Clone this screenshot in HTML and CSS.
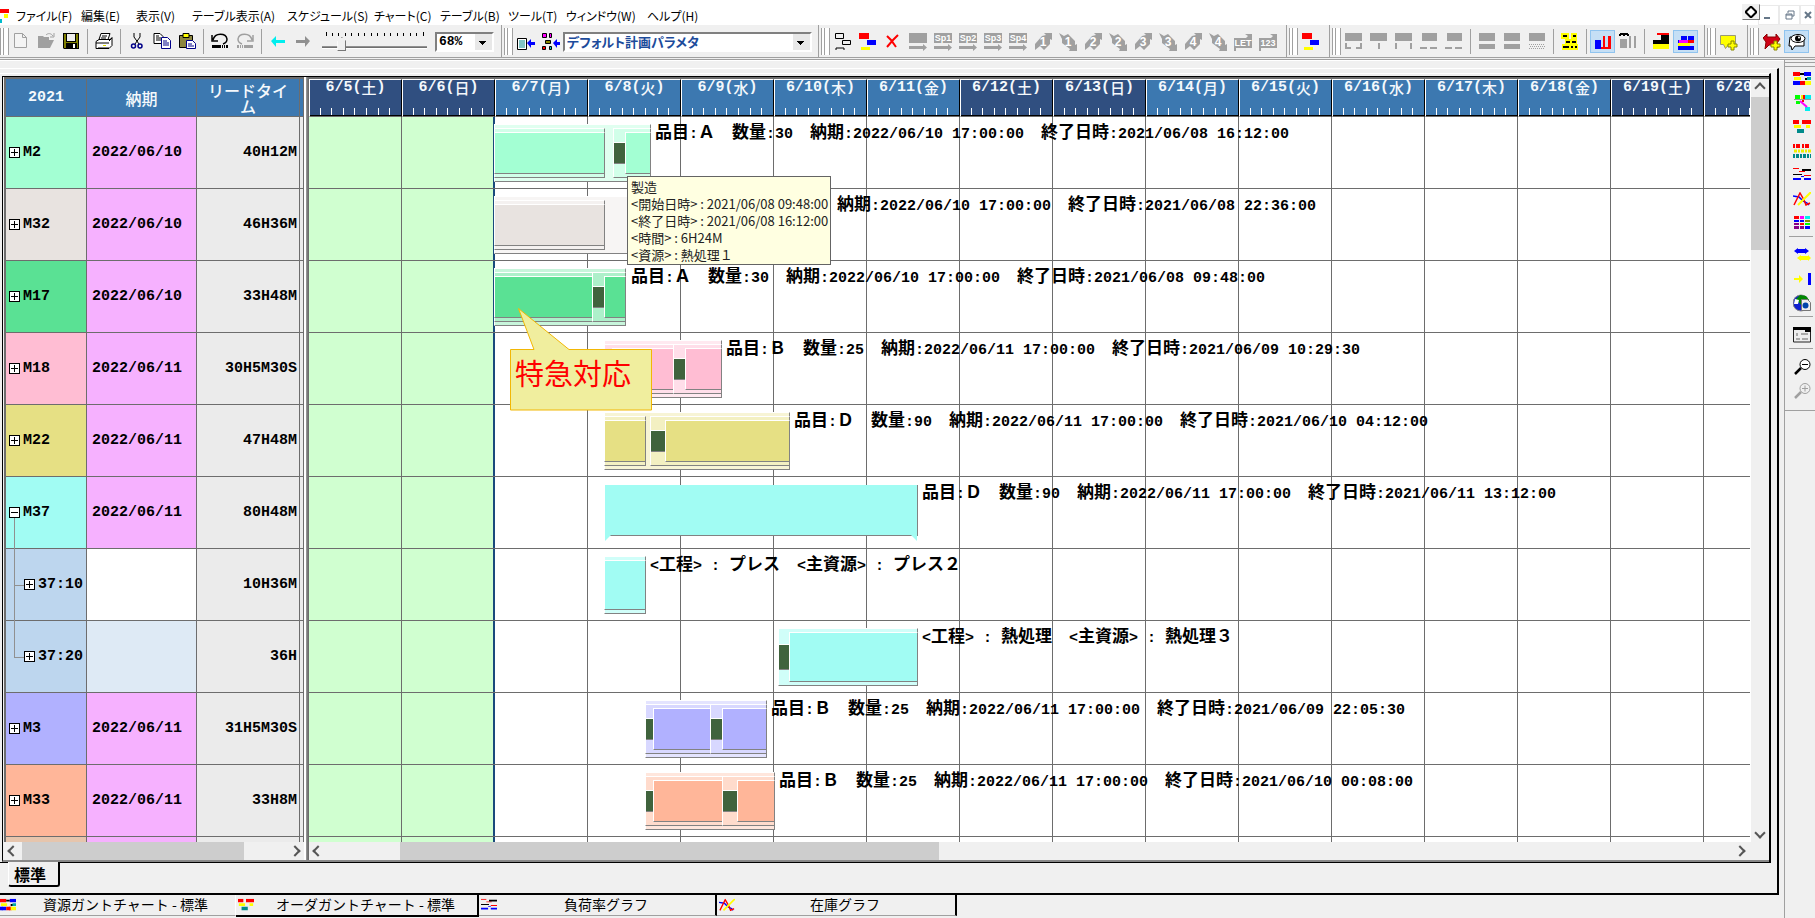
FILE: index.html
```html
<!DOCTYPE html>
<html lang="ja">
<head>
<meta charset="utf-8">
<title>オーダガントチャート</title>
<link rel="stylesheet" href="styles.css">
</head>
<body>
<svg class="defs" aria-hidden="true">
  <symbol id="ticks" viewBox="0 0 93 7"><path d="M11.5 0v7M22.5 0v7M34.5 0v7M45.5 0v7M57.5 0v7M69.5 0v7M80.5 0v7" stroke="#fff"/></symbol>
  <symbol id="sp" viewBox="0 0 18 18"><path d="M0 0h18v10H0zM0 13h14v-2l4 3.500-4 3.500v-2H0z" fill="#a0a0a0"/></symbol>
  <symbol id="up" viewBox="0 0 18 18"><path d="M10 0h8v7l-2-1v5l-6 6-4-4-5 4v-6L8 3l4-1z" fill="#a0a0a0"/></symbol>
  <symbol id="dn" viewBox="0 0 18 18"><path d="M0 0l5 3 4-2 7 7v4l2-1v7h-8l1-2-8-6V6z" fill="#a0a0a0"/></symbol>
  <symbol id="flag" viewBox="0 0 18 18"><path d="M0 5h12l2-2-3-2h7v14H2v3H0z" fill="#a0a0a0"/></symbol>
  <symbol id="res" viewBox="0 0 18 14"><path d="M0 0h7v4H0zM13 9h-3v4h3z" fill="#f00"/><path d="M7 1h4v2H7zM12 6h3v2h-3z" fill="#000"/><path d="M11 0h7v4h-7zM2 9h5v4H2z" fill="#00f"/><path d="M1 5h7v3H1zM12 9h6v4h-6z" fill="#ff0"/><path d="M14 5h4v3h-4z" fill="#0aa"/><path d="M0 9h3v4H0z" fill="#00f"/><path d="M7 9h4v4H7z" fill="#f00"/></symbol>
  <symbol id="ord" viewBox="0 0 18 14"><path d="M0 0h6v4H0zM9 0h9v4H9z" fill="#f00"/><path d="M1 5h7v3H1zM13 5h4v3h-4z" fill="#ff0"/><path d="M4 9h7v4H4z" fill="#008b8b"/></symbol>
  <symbol id="load" viewBox="0 0 18 14"><path d="M0 0h6v1H0zM6 3h6v1H6zM11 7h7v1h-7z" fill="#f00"/><path d="M9 1h9v2H9zM0 6h9v1H0z" fill="#000"/><path d="M0 10h8v2H0zM11 10h7v2h-7zM8 8h3v1H8z" fill="#00f"/></symbol>
  <symbol id="stock" viewBox="0 0 18 14"><path d="M0 4l6 1 4 4 4 2 2 2" stroke="#00f" stroke-width="1.500" fill="none"/><path d="M1 13L7 1l4 7 2 5 4-2" stroke="#f00" stroke-width="1.500" fill="none"/><path d="M5 13l7-7 6-6" stroke="#ff0" stroke-width="2" fill="none"/></symbol>
</svg>

<header class="menubar">
  <svg class="app" viewBox="0 0 9 14"><path d="M0 0h9v4H0z" fill="#f00"/><path d="M4 5h4v4H4z" fill="#ff0"/><path d="M0 10h2v4H0z" fill="#0bc"/></svg>
  <nav class="menus">
    <button>ファイル(F)</button><button>編集(E)</button><button>表示(V)</button><button>テーブル表示(A)</button><button>スケジュール(S)</button><button>チャート(C)</button><button>テーブル(B)</button><button>ツール(T)</button><button>ウィンドウ(W)</button><button>ヘルプ(H)</button>
  </nav>
  <div class="winbtns">
    <button class="pin" aria-label="ピン"><svg viewBox="0 0 12 12"><path d="M5.500 1h1L11 5.500v1L6.500 11h-1L1 6.500v-1z" fill="#fff" stroke="#000" stroke-width="2"/></svg></button>
    <button aria-label="最小化"><svg viewBox="0 0 12 12"><path d="M1 8h6v2H1z" fill="#667788"/></svg></button>
    <button aria-label="元に戻す"><svg viewBox="0 0 12 12"><path d="M4 4V2h6v5H8M2 5h6v5H2zM2 6h6" fill="none" stroke="#667788"/></svg></button>
    <button aria-label="閉じる"><svg viewBox="0 0 12 12"><path d="M3 3l6 6M9 3l-6 6" stroke="#667788" stroke-width="2"/></svg></button>
  </div>
</header>

<div class="toolbars">
  <div class="bar first">
    <button aria-label="新規"><svg viewBox="0 0 18 18"><path d="M2.500.5h8l4 4v10h-12zM10.500.5v4h4" fill="#f4f4f4" stroke="#a0a0a0"/></svg></button>
    <button aria-label="開く"><svg viewBox="0 0 18 18"><path d="M1 3h5l1 1h5v3h5l-4 8H1z" fill="#a0a0a0"/><path d="M9 2c2-2 5-2 7 1M17 0v4h-4" stroke="#a0a0a0" fill="none"/></svg></button>
    <button aria-label="保存"><svg viewBox="0 0 18 18"><path d="M1 0h16v16H2l-1-1z" fill="#000"/><path d="M2 1h2v8h10V1h2v14H2z" fill="#808000"/><path d="M5 1h8v7H5z" fill="#efefef"/><path d="M4 10h11v5H4z" fill="#000"/><path d="M11 11h2v4h-2z" fill="#fff"/></svg></button>
    <span class="sep"></span>
    <button aria-label="印刷"><svg viewBox="0 0 18 18"><path d="M6 .5h9l-2 6H4zM1 8.500l3-2h11l2-2v8l-3 3H1z" fill="#fff" stroke="#000"/><path d="M1 10h13M7 3h5M6 5h5M14 8l3-3M3 15h11" stroke="#000"/><path d="M8 12h3v1H8z" fill="#dd0"/></svg></button>
    <span class="sep"></span>
    <button aria-label="切り取り"><svg viewBox="0 0 18 18"><path d="M6 0v4l5 7M12 0v4L7 11" stroke="#000" fill="none"/><circle cx="5.500" cy="13" r="2" stroke="#008" fill="none" stroke-width="1.500"/><circle cx="12" cy="13" r="2" stroke="#008" fill="none" stroke-width="1.500"/></svg></button>
    <button aria-label="コピー"><svg viewBox="0 0 18 18"><path d="M1 .5h6l3 3v7H1z" fill="#fff" stroke="#000"/><path d="M3 3h3M3 5h5M3 7h5" stroke="#000"/><path d="M8.500 4.500h6l3 3v8h-9z" fill="#fff" stroke="#008"/><path d="M10 8h4M10 10h6M10 12h6" stroke="#008"/></svg></button>
    <button aria-label="貼り付け"><svg viewBox="0 0 18 18"><path d="M1.500 2.500h13v12h-13z" fill="#8c8640" stroke="#000"/><path d="M5 .5h6v4H5z" fill="#ff0" stroke="#000"/><path d="M8.500 7.500h6l3 3v5h-9z" fill="#fff" stroke="#008"/><path d="M10 11h4M10 13h6" stroke="#008"/></svg></button>
    <span class="sep"></span>
    <button aria-label="元に戻す"><svg viewBox="0 0 18 18"><path d="M1 2v6h6M2 7c2-8 13-7 14-1 0 3-1 4-4 5" fill="none" stroke="#000" stroke-width="1.500"/><path d="M1 12h9v3H1zM11 12h1v3h-1zM13 12h1v3h-1zM15 12h2v3h-2z"/></svg></button>
    <button aria-label="やり直し"><svg viewBox="0 0 18 18"><path d="M17 2v6h-6M16 7C14-1 3 0 2 6c0 3 1 4 4 5" fill="none" stroke="#a0a0a0" stroke-width="1.500"/><path d="M8 12h9v3H8zM6 12h1v3H6zM4 12h1v3H4zM1 12h2v3H1z" fill="#a0a0a0"/></svg></button>
    <span class="sep"></span>
    <button aria-label="前へ"><svg viewBox="0 0 18 18"><path d="M2 8l5-5v4h9v3H7v4z" fill="#0ee"/></svg></button>
    <button aria-label="次へ"><svg viewBox="0 0 18 18"><path d="M16 8l-5-5v4H2v3h9v4z" fill="#909090"/></svg></button>
    <div class="zoomer">
      <svg viewBox="0 0 105 5"><path d="M4.500 0v4M10.500 1v3M16.500 1v3M23.500 1v3M29.500 1v3M36.500 1v3M42.500 1v3M49.500 1v3M55.500 1v3M62.500 1v3M68.500 1v3M75.500 1v3M81.500 1v3M88.500 1v3M94.500 1v3M101.500 0v4" stroke="#000"/></svg>
      <input type="range" min="0" max="100" value="16" aria-label="ズーム">
    </div>
    <select class="pct" aria-label="倍率"><option>68%</option></select>
  </div>
  <div class="bar">
    <button aria-label="計画実行"><svg viewBox="0 0 18 18"><path d="M.5 5.500h9v11h-9z" fill="#fff" stroke="#000"/><path d="M2 8h6M2 10h6M2 12h6M2 14h6" stroke="#088"/><path d="M10 10l4-4v3h4v3h-4v3z" fill="#00f"/></svg></button>
    <button aria-label="計画設定"><svg viewBox="0 0 18 18"><path d="M.5.5h4v4h-4zM7.500.5h2v4h-2z" fill="#f0f" stroke="#000"/><path d="M3.500 7.500h5v3h-5z" fill="#880" stroke="#000"/><path d="M.5 13.500h3v3h-3z" fill="#f00" stroke="#000"/><path d="M7.500 13.500h2v3h-2z" fill="#0cc" stroke="#000"/><path d="M11 10l4-4v3h3v3h-3v3z" fill="#00f"/></svg></button>
    <select class="param" aria-label="計画パラメタ"><option>デフォルト計画パラメタ</option></select>
  </div>
  <div class="bar">
    <button aria-label="選択"><svg viewBox="0 0 18 18"><path d="M1.500.5h8v5h-8zM8.500 7.500h8v4h-8zM2 17v-2h8v2" fill="none" stroke="#000"/></svg></button>
    <button aria-label="表示切替"><svg viewBox="0 0 18 18"><path d="M0 0h10v6H0z" fill="#f00"/><path d="M8 7h9v5H8z" fill="#00f"/><path d="M2 14h9v3H2z" fill="#ff0"/></svg></button>
    <button aria-label="削除"><svg viewBox="0 0 18 18"><path d="M3 3l4 4 5 7M14 2L9 7l-6 7" stroke="#f00" stroke-width="2" fill="none"/></svg></button>
    <button aria-label="割付"><svg viewBox="0 0 18 18"><use href="#sp"/></svg></button>
    <button aria-label="Sp1"><svg viewBox="0 0 18 18"><use href="#sp"/><text x="9" y="8">Sp1</text></svg></button>
    <button aria-label="Sp2"><svg viewBox="0 0 18 18"><use href="#sp"/><text x="9" y="8">Sp2</text></svg></button>
    <button aria-label="Sp3"><svg viewBox="0 0 18 18"><use href="#sp"/><text x="9" y="8">Sp3</text></svg></button>
    <button aria-label="Sp4"><svg viewBox="0 0 18 18"><use href="#sp"/><text x="9" y="8">Sp4</text></svg></button>
    <button aria-label="1上"><svg class="big" viewBox="0 0 18 18"><use href="#up"/><text x="9" y="13">1</text></svg></button>
    <button aria-label="1下"><svg class="big" viewBox="0 0 18 18"><use href="#dn"/><text x="9" y="13">1</text></svg></button>
    <button aria-label="2上"><svg class="big" viewBox="0 0 18 18"><use href="#up"/><text x="9" y="13">2</text></svg></button>
    <button aria-label="2下"><svg class="big" viewBox="0 0 18 18"><use href="#dn"/><text x="9" y="13">2</text></svg></button>
    <button aria-label="3上"><svg class="big" viewBox="0 0 18 18"><use href="#up"/><text x="9" y="13">3</text></svg></button>
    <button aria-label="3下"><svg class="big" viewBox="0 0 18 18"><use href="#dn"/><text x="9" y="13">3</text></svg></button>
    <button aria-label="4上"><svg class="big" viewBox="0 0 18 18"><use href="#up"/><text x="9" y="13">4</text></svg></button>
    <button aria-label="4下"><svg class="big" viewBox="0 0 18 18"><use href="#dn"/><text x="9" y="13">4</text></svg></button>
    <button aria-label="LET"><svg viewBox="0 0 18 18"><use href="#flag"/><text x="9" y="13">LET</text></svg></button>
    <button aria-label="123"><svg viewBox="0 0 18 18"><use href="#flag"/><text x="9" y="13">123</text></svg></button>
  </div>
  <div class="bar">
    <button aria-label="オーダ"><svg viewBox="0 0 18 18"><path d="M0 0h10v6H0z" fill="#f00"/><path d="M8 7h9v5H8z" fill="#00f"/><path d="M2 14h9v3H2z" fill="#ff0"/></svg></button>
  </div>
  <div class="bar gray">
    <button aria-label="分割"><svg viewBox="0 0 18 18"><path d="M0 0h17v8H0zM0 10h2v4h4v2H0zM15 10h2v6h-6v-2h4z"/></svg></button>
    <button aria-label="結合"><svg viewBox="0 0 18 18"><path d="M0 0h17v8H0zM8 10h2v6H8z"/></svg></button>
    <button aria-label="連結"><svg viewBox="0 0 18 18"><path d="M0 0h17v8H0zM0 10h2v6H0zM15 10h2v6h-2z"/></svg></button>
    <button aria-label="前詰め"><svg viewBox="0 0 18 18"><path d="M2 0h15v8H2zM0 14h7v2H0zM10 14h7v2h-7z"/></svg></button>
    <button aria-label="後詰め"><svg viewBox="0 0 18 18"><path d="M2 0h15v8H2zM0 14h7v2H0zM10 14h7v2h-7z"/></svg></button>
    <span class="sep"></span>
    <button aria-label="上段"><svg viewBox="0 0 18 18"><path d="M1 0h16v8H1zM1 11h16v5H1z"/></svg></button>
    <button aria-label="中段"><svg viewBox="0 0 18 18"><path d="M1 0h16v8H1zM1 11h16v5H1z"/></svg></button>
    <button aria-label="下段"><svg viewBox="0 0 18 18"><path d="M1 0h16v8H1z"/><path d="M1 11.500h16M2 13.500h15M1 15.500h16" stroke="#a0a0a0" stroke-dasharray="1 1"/></svg></button>
    <span class="sep"></span>
    <button aria-label="強調"><svg viewBox="0 0 18 18"><path d="M0 0h8v6H0zM10 0h6v6h-6zM4 6h12v6H4zM1 11h16v6H1z" fill="#ff0"/><path d="M2 2h4v2H2zM12 2h3v2h-3zM5 8h4v2H5zM11 8h4v2h-4zM2 13h6v2H2zM10 13h2v2h-2zM14 13h2v2h-2z" fill="#000"/></svg></button>
    <span class="sep"></span>
    <button class="on" aria-label="実績"><svg viewBox="0 0 18 18"><path d="M1 7h6v9H1z" fill="#00f"/><path d="M7 14h2V3h2v11h3V3h3v13H7z" fill="#f00"/></svg></button>
    <button aria-label="手動"><svg viewBox="0 0 18 18"><path d="M1 6h7v9H1zM10 3h2v12h-2zM15 3h2v12h-2z"/><path d="M0 3l3-3 2 2 2-2 3 3" stroke="#000" fill="none" stroke-width="1.500"/></svg></button>
    <span class="sep"></span>
    <button aria-label="段差"><svg viewBox="0 0 18 18"><path d="M5 0h12v2H5z" fill="#f00"/><path d="M9 2h8v9H1V7h8z" fill="#000"/><path d="M1 11h16v5H1z" fill="#ff0"/></svg></button>
    <button class="on" aria-label="重ね"><svg viewBox="0 0 18 18"><path d="M4 3h6v4H4zM11 3h6v4h-6zM1 7h3v4H1zM1 13h16v4H1z" fill="#00f"/><path d="M2 7h9v3H2z" fill="#f0f"/><path d="M11 7h6v3h-6z" fill="#f00"/><path d="M1 10h12v3H1z" fill="#ff0"/></svg></button>
  </div>
  <div class="bar">
    <button aria-label="吹き出し追加"><svg viewBox="0 0 18 18"><path d="M.5 2.500h15v9h-7l-3 4-2-4h-3z" fill="#ff0" stroke="#997"/><path d="M11 8h3v3h3v3h-3v3h-3v-3H8v-3h3z" fill="#ff0" stroke="#880"/></svg></button>
  </div>
  <div class="bar">
    <button aria-label="リンク追加"><svg viewBox="0 0 18 18"><path d="M0 5l4-4v3h9V1l4 5-3 4 1 5-4-3H6l-4 4 1-7z" fill="#d00016" stroke="#800"/><path d="M11 8h3v3h3v3h-3v3h-3v-3H8v-3h3z" fill="#ff0" stroke="#880"/></svg></button>
    <button class="on" aria-label="表示確認"><svg viewBox="0 0 18 18"><path d="M2 4h14v9H7l-3 4-1-4H1z" fill="#fff" stroke="#000"/><ellipse cx="10" cy="5.500" rx="7" ry="4" fill="#fff" stroke="#000"/><circle cx="10" cy="5.500" r="3"/><circle cx="11" cy="4.500" r="1" fill="#fff"/></svg></button>
  </div>
</div>

<div class="work">
  <main class="main">
    <section class="window">
      <div class="sheet">
        <div class="panes">
          <div class="left">
            <div class="clip">
              <table>
                <colgroup><col class="c1"><col class="c2"><col class="c3"><col class="c4"></colgroup>
                <thead><tr><th>2021</th><th><span class="kj">納期</span></th><th><span class="kj">リードタイ<br>ム</span></th><th></th></tr></thead>
                <tbody>
                  <tr><td class="m2"><button class="box" aria-label="開く"></button>M2</td><td>2022/06/10</td><td>40H12M</td><td></td></tr>
                  <tr><td class="m32"><button class="box" aria-label="開く"></button>M32</td><td>2022/06/10</td><td>46H36M</td><td></td></tr>
                  <tr><td class="m17"><button class="box" aria-label="開く"></button>M17</td><td>2022/06/10</td><td>33H48M</td><td></td></tr>
                  <tr><td class="m18"><button class="box" aria-label="開く"></button>M18</td><td>2022/06/11</td><td>30H5M30S</td><td></td></tr>
                  <tr><td class="m22"><button class="box" aria-label="開く"></button>M22</td><td>2022/06/11</td><td>47H48M</td><td></td></tr>
                  <tr><td class="m37 open"><button class="box minus" aria-label="閉じる"></button>M37</td><td>2022/06/11</td><td>80H48M</td><td></td></tr>
                  <tr><td class="child"><button class="box" aria-label="開く"></button>37:10</td><td class="none"></td><td>10H36M</td><td></td></tr>
                  <tr><td class="child last"><button class="box" aria-label="開く"></button>37:20</td><td class="none pale"></td><td>36H</td><td></td></tr>
                  <tr><td class="m3"><button class="box" aria-label="開く"></button>M3</td><td>2022/06/11</td><td>31H5M30S</td><td></td></tr>
                  <tr><td class="m33"><button class="box" aria-label="開く"></button>M33</td><td>2022/06/11</td><td>33H8M</td><td></td></tr>
                  <tr><td class="next"></td><td></td><td></td><td></td></tr>
                </tbody>
              </table>
            </div>
            <div class="hscroll"><i class="ar l"></i><div class="track"><div class="thumb" style="width:84%"></div></div><i class="ar r"></i></div>
          </div>
          <div class="sash"></div>
          <div class="right">
            <div class="view">
              <div class="chart">
                <div class="days">
                  <div class="we">6/5(<span class="kd">土</span>)<svg><use href="#ticks"/></svg></div><div class="we">6/6(<span class="kd">日</span>)<svg><use href="#ticks"/></svg></div><div>6/7(<span class="kd">月</span>)<svg><use href="#ticks"/></svg></div><div>6/8(<span class="kd">火</span>)<svg><use href="#ticks"/></svg></div><div>6/9(<span class="kd">水</span>)<svg><use href="#ticks"/></svg></div><div>6/10(<span class="kd">木</span>)<svg><use href="#ticks"/></svg></div><div>6/11(<span class="kd">金</span>)<svg><use href="#ticks"/></svg></div><div class="we">6/12(<span class="kd">土</span>)<svg><use href="#ticks"/></svg></div><div class="we">6/13(<span class="kd">日</span>)<svg><use href="#ticks"/></svg></div><div>6/14(<span class="kd">月</span>)<svg><use href="#ticks"/></svg></div><div>6/15(<span class="kd">火</span>)<svg><use href="#ticks"/></svg></div><div>6/16(<span class="kd">水</span>)<svg><use href="#ticks"/></svg></div><div>6/17(<span class="kd">木</span>)<svg><use href="#ticks"/></svg></div><div>6/18(<span class="kd">金</span>)<svg><use href="#ticks"/></svg></div><div class="we">6/19(<span class="kd">土</span>)<svg><use href="#ticks"/></svg></div><div class="we">6/20(<span class="kd">日</span>)<svg><use href="#ticks"/></svg></div>
                </div>
                <div class="grid">
                  <div class="cols"><i class="past"></i><i class="past now"></i><i></i><i></i><i></i><i></i><i></i><i></i><i></i><i></i><i></i><i></i><i></i><i></i><i></i><i></i></div>
                  <div class="row m2">
                    <div class="b1" style="left:185px;width:157px"></div><div class="b2" style="left:185px;width:111px"></div><div class="b3" style="left:185px;width:111px"></div><div class="b2" style="left:304px;width:38px"></div><div class="setup" style="left:305px;width:11px"></div><div class="b3" style="left:316px;width:26px"></div>
                    <p style="left:346px">品目<b>:</b>Ａ　数量<b>:30</b>　納期<b>:2022/06/10 17:00:00</b>　終了日時<b>:2021/06/08 16:12:00</b></p>
                  </div>
                  <div class="row m32">
                    <div class="b1" style="left:185px;width:183px"></div><div class="b2" style="left:185px;width:111px"></div><div class="b3" style="left:185px;width:111px"></div>
                    <p style="left:528px">納期<b>:2022/06/10 17:00:00</b>　終了日時<b>:2021/06/08 22:36:00</b></p>
                  </div>
                  <div class="row m17">
                    <div class="b1" style="left:185px;width:132px"></div><div class="b2" style="left:185px;width:99px"></div><div class="b3" style="left:185px;width:99px"></div><div class="b2" style="left:283px;width:34px"></div><div class="setup" style="left:284px;width:11px"></div><div class="b3" style="left:295px;width:22px"></div>
                    <p style="left:322px">品目<b>:</b>Ａ　数量<b>:30</b>　納期<b>:2022/06/10 17:00:00</b>　終了日時<b>:2021/06/08 09:48:00</b></p>
                  </div>
                  <div class="row m18">
                    <div class="b1" style="left:295px;width:118px"></div><div class="b2" style="left:295px;width:70px"></div><div class="b3" style="left:303px;width:62px"></div><div class="b2" style="left:364px;width:49px"></div><div class="setup" style="left:365px;width:11px"></div><div class="b3" style="left:376px;width:37px"></div>
                    <p style="left:417px">品目<b>:</b>Ｂ　数量<b>:25</b>　納期<b>:2022/06/11 17:00:00</b>　終了日時<b>:2021/06/09 10:29:30</b></p>
                  </div>
                  <div class="row m22">
                    <div class="b1" style="left:295px;width:186px"></div><div class="b2" style="left:295px;width:42px"></div><div class="b3" style="left:295px;width:42px"></div><div class="b2" style="left:341px;width:140px"></div><div class="setup" style="left:342px;width:14px"></div><div class="b3" style="left:356px;width:125px"></div>
                    <p style="left:485px">品目<b>:</b>Ｄ　数量<b>:90</b>　納期<b>:2022/06/11 17:00:00</b>　終了日時<b>:2021/06/10 04:12:00</b></p>
                  </div>
                  <div class="row m37">
                    <div class="summary" style="left:296px;width:313px"></div>
                    <p style="left:613px">品目<b>:</b>Ｄ　数量<b>:90</b>　納期<b>:2022/06/11 17:00:00</b>　終了日時<b>:2021/06/11 13:12:00</b></p>
                  </div>
                  <div class="row m37 work-row">
                    <div class="b1" style="left:295px;width:42px"></div><div class="b2" style="left:295px;width:42px"></div>
                    <p style="left:341px"><b>&lt;</b>工程<b>&gt; : </b>プレス　<b>&lt;</b>主資源<b>&gt; : </b>プレス２</p>
                  </div>
                  <div class="row m37 work-row">
                    <div class="b1" style="left:469px;width:140px"></div><div class="setup" style="left:470px;width:10px"></div><div class="b2" style="left:480px;width:129px"></div>
                    <p style="left:613px"><b>&lt;</b>工程<b>&gt; : </b>熱処理　<b>&lt;</b>主資源<b>&gt; : </b>熱処理３</p>
                  </div>
                  <div class="row m3">
                    <div class="b1" style="left:336px;width:122px"></div><div class="b2" style="left:336px;width:66px"></div><div class="setup" style="left:337px;width:7px"></div><div class="b3" style="left:344px;width:58px"></div><div class="b2" style="left:401px;width:57px"></div><div class="setup" style="left:402px;width:11px"></div><div class="b3" style="left:413px;width:45px"></div>
                    <p style="left:462px">品目<b>:</b>Ｂ　数量<b>:25</b>　納期<b>:2022/06/11 17:00:00</b>　終了日時<b>:2021/06/09 22:05:30</b></p>
                  </div>
                  <div class="row m33">
                    <div class="b1" style="left:336px;width:130px"></div><div class="b2" style="left:336px;width:78px"></div><div class="setup" style="left:337px;width:7px"></div><div class="b3" style="left:344px;width:70px"></div><div class="b2" style="left:413px;width:53px"></div><div class="setup" style="left:414px;width:14px"></div><div class="b3" style="left:428px;width:38px"></div>
                    <p style="left:470px">品目<b>:</b>Ｂ　数量<b>:25</b>　納期<b>:2022/06/11 17:00:00</b>　終了日時<b>:2021/06/10 00:08:00</b></p>
                  </div>
                  <div class="callout">
                    <svg viewBox="0 0 142 103"><path d="M.5 41.500H24L8.500.5 59 41.500h82.500v60.500H.5z" fill="#f0ee9e" stroke="#f2b705"/></svg>
                    <span>特急対応</span>
                  </div>
                  <div class="tip" role="tooltip">製造<br>&lt;開始日時&gt; : 2021/06/08 09:48:00<br>&lt;終了日時&gt; : 2021/06/08 16:12:00<br>&lt;時間&gt; : 6H24M<br>&lt;資源&gt; : 熱処理１</div>
                </div>
              </div>
              <div class="vscroll"><i class="ar u"></i><div class="track"><div class="thumb" style="height:21%"></div></div><i class="ar d"></i></div>
            </div>
            <div class="hscroll wide"><i class="ar l"></i><div class="track"><div class="thumb" style="width:38.4%;margin-left:5.2%"></div></div><i class="ar r"></i></div>
          </div>
        </div>
      </div>
      <div class="sheet-tabs"><button>標準</button></div>
    </section>
    <nav class="view-tabs">
      <button class="t1"><svg viewBox="0 0 18 14"><use href="#res"/></svg><span>資源ガントチャート - 標準</span></button>
      <button class="t2 active"><svg viewBox="0 0 18 14"><use href="#ord"/></svg><span>オーダガントチャート - 標準</span></button>
      <button class="t3"><svg viewBox="0 0 18 14"><use href="#load"/></svg><span>負荷率グラフ</span></button>
      <button class="t4"><svg viewBox="0 0 18 14"><use href="#stock"/></svg><span>在庫グラフ</span></button>
    </nav>
  </main>
  <aside class="side">
    <div class="tools">
      <button aria-label="資源ガントチャート"><svg viewBox="0 0 18 14"><use href="#res"/></svg></button>
      <button aria-label="差立て"><svg viewBox="0 0 18 18"><path d="M2 1h5v5H2zM3 7h4v3H3z" fill="#0f0"/><path d="M12 1h6v4h-6zM12 13h5v4h-5z" fill="#0ee"/><path d="M8 1h2v4H8z" fill="#ee0"/><path d="M10 1h2v5h-2zM9 5h2v3H9z" fill="#f00"/><path d="M7 7l7 6" stroke="#f0f" stroke-width="2"/><path d="M1 5.500h17" stroke="#999"/></svg></button>
      <button aria-label="オーダガントチャート"><svg viewBox="0 0 18 14"><use href="#ord"/></svg></button>
      <button aria-label="ピース"><svg viewBox="0 0 18 14"><path d="M0 2h18" stroke="#f00" stroke-width="4" stroke-dasharray="2 1 4 2"/><path d="M1 7h17" stroke="#ee0" stroke-width="3" stroke-dasharray="3 1 2 1"/><path d="M0 12h18" stroke="#088" stroke-width="4" stroke-dasharray="2 1 3 1"/></svg></button>
      <button aria-label="負荷グラフ"><svg viewBox="0 0 18 14"><use href="#load"/></svg></button>
      <button aria-label="在庫グラフ"><svg viewBox="0 0 18 14"><use href="#stock"/></svg></button>
      <button aria-label="評価表"><svg viewBox="0 0 18 14"><path d="M1 0h5v3H1zM7 7h4v2H7z" fill="#f00"/><path d="M7 0h4v3H7z" fill="#f0f"/><path d="M12 0h5v3h-5z" fill="#0ee"/><path d="M1 4h5v2H1zM7 4h4v2H7zM12 10h5v3h-5z" fill="#00f"/><path d="M12 4h5v2h-5z" fill="#880"/><path d="M1 7h5v2H1zM1 10h5v3H1zM7 10h4v3H7z" fill="#808"/><path d="M12 7h5v2h-5z" fill="#0f0"/></svg></button>
      <span class="hsep"></span>
      <button aria-label="同期"><svg viewBox="0 0 18 14"><path d="M1 3l4-3v1h7V0l4 3-4 3V5H5v1z" fill="#00f"/><path d="M4 10l4-3v1h7V7l3 3-3 3v-1H8v1z" fill="#ff0"/></svg></button>
      <button aria-label="右端へ"><svg viewBox="0 0 18 14"><path d="M1 6h5V3l4 4-4 4V8H1z" fill="#ff0"/><path d="M15 1h3v12h-3z" fill="#00f"/></svg></button>
      <button aria-label="地球"><svg viewBox="0 0 18 18"><circle cx="8" cy="9" r="8" fill="#1020d0" stroke="#888"/><path d="M7 1l6 1 3 4-5 1-3 4-5-6z" fill="#080"/><path d="M2 5l4 1-1 4H1z" fill="#fff"/><path d="M8.500 5.500h6l3 3v8h-9z" fill="#eee" stroke="#777"/><circle cx="12.500" cy="11.500" r="3" fill="#04a"/></svg></button>
      <span class="hsep"></span>
      <button aria-label="プロパティ"><svg viewBox="0 0 18 16"><path d="M.5 1h17v14H.5z" fill="#eee" stroke="#222"/><path d="M0 0h12v3H0zM12 0h6v5h-6z"/><path d="M3 6h2v3H3zM3 11h4v2H3zM9 11h6v2H9zM8 6h7v2H8z" fill="#aaa"/></svg></button>
      <span class="hsep"></span>
      <button aria-label="縮小"><svg viewBox="0 0 18 18"><circle cx="12" cy="6.500" r="5" fill="#fff" stroke="#000"/><path d="M9 6.500h6" stroke="#000"/><path d="M8 10l-6 6" stroke="#000" stroke-width="2.500"/></svg></button>
      <button aria-label="拡大"><svg viewBox="0 0 18 18"><circle cx="12" cy="6.500" r="5" fill="none" stroke="#a0a0a0"/><path d="M9 6.500h6M12 3.500v6" stroke="#a0a0a0"/><path d="M8 10l-6 6" stroke="#a0a0a0" stroke-width="2.500"/></svg></button>
    </div>
  </aside>
</div>
</body>
</html>
```
FILE: styles.css
```css
* { box-sizing: border-box; }
body {
  margin: 0;
  height: 100vh;
  display: flex;
  flex-direction: column;
  overflow: hidden;
  background: #f0f0f0;
  color: #000;
  font-family: "Noto Sans CJK JP", sans-serif;
  font-size: 12px;
}
button { margin: 0; padding: 0; border: 0; background: none; font: inherit; color: inherit; }
svg { display: block; flex: none; }
.defs { position: absolute; width: 0; height: 0; }

/* menu bar */
.menubar { display: flex; align-items: center; height: 25px; background: #fff; flex: none; }
.app { width: 9px; height: 14px; margin: 6px 7px 0 0; shape-rendering: crispEdges; }
.menus { display: grid; grid-template-columns: 65px 55px 56px 95px 87px 66px 68px 58px 81px auto; padding-top: 6px; }
.menus button { text-align: left; white-space: nowrap; line-height: 18px; font-feature-settings: "palt"; }
.winbtns { display: flex; margin-left: auto; align-items: flex-end; height: 25px; }
.winbtns button { width: 21px; height: 20px; display: grid; place-items: center; border: 1px solid #eaeaea; overflow: hidden; }
.winbtns button:last-child { width: 15px; }
.winbtns svg { width: 12px; height: 12px; }
.winbtns .pin { width: 18px; height: 16px; align-self: flex-start; margin: 4px -2px 0 0; background: #f0f0f0; border: 1px solid; border-color: #f0f0f0 #777 #777 #f0f0f0; position: relative; z-index: 1; }

/* toolbars */
.toolbars { display: flex; flex: none; height: 35px; border-bottom: 1px solid #a0a0a0; }
.bar { display: flex; align-items: center; height: 33px; padding: 1px 6px 0 11px; border-bottom: 1px solid #a0a0a0; border-right: 1px solid #a0a0a0; position: relative; flex: none; }
.bar::before { content: ""; position: absolute; left: 2px; top: 3px; width: 7px; height: 27px; border: solid #a0a0a0; border-width: 0 1px; background: linear-gradient(90deg, #fff 2px, #a0a0a0 2px, #a0a0a0 3px, #fff 3px); }
.bar.first { padding: 1px 7px 0 8px; }
.bar.first::before { left: 0; }
.bar button { width: 25px; height: 23px; display: grid; place-items: center; border: 1px solid transparent; }
.bar button.on { background: #c5dff5; border-color: #90c4ef; }
.bar svg { width: 18px; height: 18px; }
.bar svg text { font: bold 9px "Liberation Sans", sans-serif; fill: #fff; text-anchor: middle; }
.bar svg.big text { font-size: 12px; }
.gray svg { fill: #a0a0a0; shape-rendering: crispEdges; }
.sep { width: 8px; height: 25px; background: linear-gradient(90deg, transparent 4px, #a0a0a0 4px, #a0a0a0 5px, transparent 5px); }
.zoomer { width: 105px; margin: 0 8px 0 7px; }
.bar .zoomer svg { width: 105px; height: 5px; }
.zoomer input { appearance: none; display: block; width: 105px; height: 14px; margin: 0; background: linear-gradient(transparent 9px, #a0a0a0 9px, #606060 11px, #fff 11px, #fff 12px, transparent 12px); }
.zoomer input::-webkit-slider-thumb { appearance: none; width: 9px; height: 14px; background: #f0f0f0; border: 1px solid #777; border-left-color: #fff; clip-path: polygon(50% 0, 100% 30%, 100% 100%, 0 100%, 0 30%); }
select { appearance: none; border: 2px solid; border-color: #808080 #fff #fff #808080; border-radius: 0; height: 20px; font-weight: bold; padding: 0 0 0 2px; line-height: 15px; color: #000;
  background: linear-gradient(#000, #000) right 6px top 7px / 7px 1px no-repeat, linear-gradient(#000, #000) right 7px top 8px / 5px 1px no-repeat, linear-gradient(#000, #000) right 8px top 9px / 3px 1px no-repeat, linear-gradient(#000, #000) right 9px top 10px / 1px 1px no-repeat, linear-gradient(90deg, #fff 1px, #e8e8e8 1px) right / 18px 100% no-repeat, #fff; }
.pct { width: 59px; font: bold 13px "Liberation Mono", monospace; }
.param { width: 249px; font: bold 13px/15px "Noto Sans CJK JP", sans-serif; color: #1c4b9b; font-feature-settings: "palt"; }

/* work area */
.work { flex: 1; display: flex; min-height: 0; }
.main { flex: 1; min-width: 0; display: flex; flex-direction: column; padding-top: 7px; border-top: 1px solid #fff; }
.window { flex: 1; min-height: 0; display: flex; flex-direction: column; margin-right: 5px; padding-top: 4px; border-top: 1px solid #fff; border-right: 2px solid #000; border-bottom: 2px solid #000; }
.sheet { flex: 1; min-height: 0; margin-right: 6px; padding-top: 2px; border-top: 1px solid #fff; border-right: 2px solid #000; border-bottom: 1px solid #000; display: flex; }
.panes { flex: 1; min-width: 0; display: flex; margin-left: 2px; border-top: 1px solid #000; border-left: 1px solid #000; border-bottom: 2px solid #888; }
.left { width: 301px; flex: none; display: flex; flex-direction: column; padding-left: 1px; }
.clip { flex: 1; min-height: 0; overflow: hidden; border-left: 2px solid #6d6d6d; border-top: 2px solid #6d6d6d; }
.sash { width: 5px; flex: none; background: linear-gradient(90deg, #fff 2px, #a0a0a0 2px, #6d6d6d 4px); }
.right { flex: 1; min-width: 0; display: flex; flex-direction: column; }
.view { flex: 1; min-height: 0; display: flex; border-top: 2px solid #6d6d6d; }

table { width: 298px; table-layout: fixed; border-collapse: separate; border-spacing: 0; font: bold 15px "Liberation Mono", "Noto Sans CJK JP", monospace; }
.c1 { width: 81px; } .c2 { width: 110px; } .c3 { width: 103px; } .c4 { width: 4px; }
.kj { display: block; font-family: "Noto Sans CJK JP", sans-serif; font-size: 16px; line-height: 16px; font-weight: 500; }
th { height: 38px; padding: 0; background: #3c78b0; color: #f4f8fc; border: solid #6d6d6d; border-width: 0 1px 1px 0; line-height: 16px; }
td { height: 72px; padding: 0; border: solid #6d6d6d; border-width: 0 1px 1px 0; background: #ebebeb; line-height: 18px; }
td:first-child { padding-left: 3px; background: var(--c, #bdd6ee); position: relative; }
td:nth-child(2) { background: #f6b1ff; padding-left: 5px; }
td.none:nth-child(2) { background: #fff; }
td.pale:nth-child(2) { background: #deeaf5; }
td:nth-child(3) { text-align: right; padding-right: 2px; }
td.child:first-child { padding-left: 18px; }
td.child::before { content: ""; position: absolute; left: 8px; top: 0; width: 9px; height: 36px; border: solid #909090; border-width: 0 0 1px 1px; }
td.child:not(.last)::after { content: ""; position: absolute; left: 8px; top: 36px; bottom: -1px; width: 1px; background: #909090; }
td.open::after { content: ""; position: absolute; left: 8px; top: 41px; bottom: -1px; width: 1px; background: #909090; }
.box { display: inline-block; width: 11px; height: 11px; margin-right: 3px; border: 1px solid #000; vertical-align: -1px;
  background: linear-gradient(#000, #000) center / 7px 1px no-repeat, linear-gradient(#000, #000) center / 1px 7px no-repeat, #fff; }
.box.minus { background: linear-gradient(#000, #000) center / 7px 1px no-repeat, #fff; }

.m2 { --c: #a3ffd3; } .m32 { --c: #e8e3e0; } .m17 { --c: #5ae194; } .m18 { --c: #ffbdd3; } .m22 { --c: #e6e084; }
.m37 { --c: #a1fcf3; } .m3 { --c: #b1b1ff; } .m33 { --c: #ffb699; } .next { --c: #e6c5ad; }

/* chart */
.chart { flex: 1; min-width: 0; overflow: hidden; border-right: 1px solid #fff; }
.days { display: flex; width: max-content; }
.days div { width: 93px; height: 38px; flex: none; display: flex; flex-wrap: wrap; justify-content: center; align-content: flex-start; color: #f4f8fc; background: #3c78b0; border: 1px solid; border-color: #fff #000 #6d6d6d #fff; box-shadow: inset 0 -1px #000; font: bold 15px/16px "Liberation Mono", monospace; }
.days .we { background: #304f80; }
.days .kd { font: 500 15px/15px "Noto Sans CJK JP", sans-serif; }
.days svg { width: 93px; height: 7px; margin: 12px -1px 0; shape-rendering: crispEdges; }
.grid { position: relative; width: 1488px; padding-bottom: 72px; background: #fff; }
.cols { position: absolute; inset: 0; display: flex; }
.cols i { width: 93px; flex: none; border-right: 1px solid #6d6d6d; }
.cols .past { background: #d0ffd0; }
.cols .now { border-right: 2px solid #1a4a7c; }
.row { position: relative; height: 72px; border-bottom: 1px solid #6d6d6d; }
.b1, .b2, .b3, .setup { position: absolute; border: 1px solid; border-color: #fff #828282 #828282 #fff; }
.b1 { top: 7px; height: 58px; background: color-mix(in srgb, var(--c) 34%, #fff); }
.b2 { top: 11px; height: 50px; background: color-mix(in srgb, var(--c) 50%, #fff); }
.b3 { top: 15px; height: 42px; background: var(--c); }
.setup { top: 25px; height: 22px; background: #40633d; border-width: 1px 0; }
.work-row .b1 { background: color-mix(in srgb, var(--c) 50%, #fff); }
.work-row .b2 { background: var(--c); }
.work-row .setup { top: 23px; height: 26px; }
.summary { position: absolute; top: 8px; height: 51px; background: var(--c); border-right: 1px solid #828282; border-bottom: 1px solid #828282; }
.summary::before, .summary::after { content: ""; position: absolute; top: 50px; width: 6px; height: 6px; background: var(--c); }
.summary::before { left: 0; clip-path: polygon(0 0, 100% 0, 0 100%); }
.summary::after { right: 0; clip-path: polygon(0 0, 100% 0, 100% 100%); }
.row p { position: absolute; top: 2px; margin: 0; white-space: pre; font-weight: bold; font-size: 17px; line-height: 24px; }
.row b { font: bold 15px "Liberation Mono", monospace; }
.callout { position: absolute; left: 201px; top: 191px; width: 142px; height: 103px; }
.callout svg { width: 142px; height: 103px; position: absolute; }
.callout span { position: absolute; left: 5px; top: 43px; color: #f00; font-size: 29px; line-height: 42px; }
.tip { position: absolute; left: 318px; top: 59px; padding: 1px 2px 1px 3px; background: #ffffe1; border: 1px solid #646464; font-size: 13px; line-height: 17px; white-space: nowrap; color: #222; }

/* scroll bars */
.hscroll { display: flex; align-items: center; flex: none; height: 18px; background: #f0f0f0; }
.hscroll.wide { padding-right: 20px; }
.track { flex: 1; align-self: stretch; min-width: 0; }
.thumb { background: #cdcdcd; height: 100%; }
.vscroll { width: 18px; flex: none; display: flex; flex-direction: column; align-items: center; background: #f0f0f0; }
.ar { width: 18px; height: 18px; flex: none; display: grid; place-items: center; }
.ar::before { content: ""; width: 6px; height: 6px; border: solid #555; border-width: 2px 0 0 2px; rotate: 45deg; }
.ar.l::before { rotate: -45deg; }
.ar.r::before { rotate: 135deg; }
.ar.d::before { rotate: 225deg; }

/* tabs */
.sheet-tabs { height: 30px; flex: none; padding-left: 8px; }
.sheet-tabs button { position: relative; top: -1px; width: 52px; height: 25px; padding-left: 5px; text-align: left; background: #f0f0f0; border: solid #000; border-width: 0 2px 2px 0; border-left: 1px solid #fff; border-radius: 0 0 3px 3px; font-weight: bold; font-size: 16px; line-height: 22px; }
.view-tabs { display: flex; height: 23px; flex: none; font-size: 14px; }
.view-tabs button { display: flex; align-items: center; height: 21px; border-bottom: 1px solid #a0a0a0; border-right: 2px solid #000; padding-left: 2px; }
.view-tabs span { flex: 1; text-align: center; line-height: 20px; padding-bottom: 2px; white-space: nowrap; }
.view-tabs svg { width: 16px; height: 14px; }
.view-tabs .t1 { width: 236px; padding-left: 0; border-right: 1px solid #fff; }
.view-tabs .active { width: 243px; height: 22px; border-bottom: 2px solid #000; }
.view-tabs .t3 { width: 238px; }
.view-tabs .t4 { width: 240px; }

/* right tool strip */
.side { width: 31px; flex: none; border-left: 1px solid #a0a0a0; }
.tools { margin-top: 2px; padding: 4px 0 7px 4px; border-top: 1px solid #a0a0a0; border-bottom: 1px solid #a0a0a0; background: linear-gradient(#a0a0a0, #a0a0a0) 0 3px / 100% 1px no-repeat; }
.tools button { width: 25px; height: 24px; display: grid; place-items: center; }
.tools svg { width: 18px; height: 18px; }
.hsep { display: block; height: 8px; width: 24px; background: linear-gradient(transparent 1px, #a0a0a0 1px, #a0a0a0 2px, transparent 2px); }
```
